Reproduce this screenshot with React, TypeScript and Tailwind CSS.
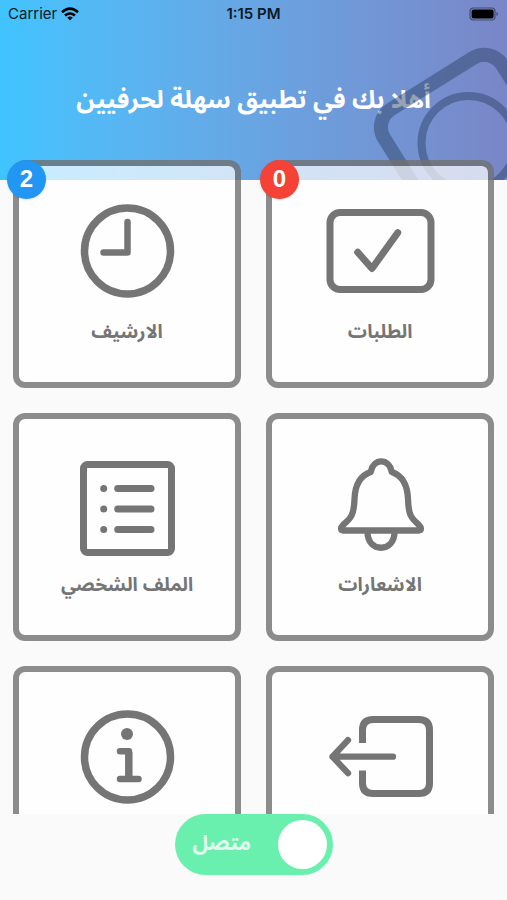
import React from "react";

const arabic = "font-['Noto_Sans_Arabic','DejaVu_Sans',sans-serif]";

type Tile = { name: string; label?: string; icon: React.ReactNode; badge?: string; badgeClass?: string };

const iconProps = {
  viewBox: "0 0 120 110",
  className: "h-[110px] w-[120px]",
  fill: "none",
  stroke: "currentColor",
  strokeLinecap: "round" as const,
  strokeLinejoin: "round" as const,
  "aria-hidden": true,
};

const ArchiveIcon = () => (
  <svg {...iconProps} strokeWidth="7.5">
    <circle cx="60.5" cy="55" r="43" />
    <path d="M60.500 26V56.500H36.500" strokeWidth="6.5" />
  </svg>
);

const RequestsIcon = () => (
  <svg {...iconProps} strokeWidth="7">
    <rect x="10" y="16.5" width="101" height="77" rx="10" />
    <path d="M37.700 56.300L52 72.500L77.700 36.700" />
  </svg>
);

const ProfileIcon = () => (
  <svg {...iconProps} strokeWidth="7">
    <rect x="16.5" y="15.5" width="88" height="88" rx="4" />
    <path d="M50.700 39.500H84M50.700 60H84M50.700 80.500H84M36.700 39.500h.01M36.700 60h.01M36.700 80.500h.01" />
  </svg>
);

const BellIcon = () => (
  <svg {...iconProps} strokeWidth="6.300">
    <path d="M51.200 21.500A10.200 11 0 0 1 71.300 21.500L71.800 23C82 26.500 87.500 36 88 50C88.500 66 91 69 98.500 75.500C102 79 101.500 81.500 98.500 81.500H23.500C20.500 81.500 20 79 23.500 75.500C31 69 34 66 34.500 50C35 36 40.500 26.500 50.700 23Z" />
    <path d="M47.500 83C47.500 104 74.500 104 74.500 83" />
  </svg>
);

const InfoIcon = () => (
  <svg {...iconProps} strokeWidth="7.5">
    <circle cx="60.5" cy="55" r="43" />
    <circle cx="60" cy="32" r="6" fill="currentColor" stroke="none" />
    <path d="M53 49.200H62M53 77H71.500" strokeWidth="6.500" />
    <path d="M61.800 50V76" strokeWidth="7.500" strokeLinecap="butt" />
  </svg>
);

const LogoutIcon = () => (
  <svg {...iconProps} strokeWidth="7">
    <path d="M42.500 41V28Q42.500 17.500 53 17.500H99Q109.500 17.500 109.500 28V81Q109.500 91.500 99 91.500H53Q42.500 91.500 42.500 81V68.500" strokeLinecap="butt" />
    <path d="M73 54.700H12.500M28 38.200L12.500 54.700L28 71.200" strokeWidth="6.300" />
  </svg>
);

const tiles: Tile[] = [
  { name: "الطلبات", label: "الطلبات", icon: <RequestsIcon />, badge: "0", badgeClass: "bg-[#f44336]" },
  { name: "الارشيف", label: "الارشيف", icon: <ArchiveIcon />, badge: "2", badgeClass: "bg-[#2196f3]" },
  { name: "الاشعارات", label: "الاشعارات", icon: <BellIcon /> },
  { name: "الملف الشخصي", label: "الملف الشخصي", icon: <ProfileIcon /> },
  { name: "خروج", icon: <LogoutIcon /> },
  { name: "معلومات", icon: <InfoIcon /> },
];

function StatusBar() {
  return (
    <div dir="ltr" className="grid h-7 grid-cols-3 items-center px-2 font-[Inter,sans-serif] text-[15px] text-[#0b1a24]">
      <div className="flex items-center gap-1">
        <span>Carrier</span>
        <svg viewBox="0 0 18 14" className="h-3.5 w-[18px]" fill="none" stroke="#000" strokeWidth="2.600" aria-hidden="true">
          <path d="M1 5.200Q9 -1.800 17 5.200M4 8.600Q9 4.400 14 8.600" />
          <path d="M9 13.500L6.200 10.600Q9 8.600 11.800 10.600Z" fill="#000" stroke="none" />
        </svg>
      </div>
      <div className="text-center font-semibold">1:15 PM</div>
      <svg viewBox="0 0 30 14" className="h-3.5 w-[30px] justify-self-end" aria-hidden="true">
        <rect x="1" y="1" width="25" height="12" rx="3.500" fill="none" stroke="#000" strokeOpacity=".45" strokeWidth="1.200" />
        <rect x="2.600" y="2.600" width="22" height="9" rx="2" fill="#000" />
        <path d="M27.500 5v4q1.500-.5 1.500-2t-1.500-2z" fill="#000" fillOpacity=".45" />
      </svg>
    </div>
  );
}

export default function App() {
  return (
    <div dir="rtl" className={`flex h-screen flex-col overflow-hidden bg-[#fafafa] ${arabic}`}>
      <header className="relative h-[180px] shrink-0 overflow-hidden bg-linear-to-r from-[#40c4ff] to-[#7986c7]">
        <StatusBar />
        <h1 className="mt-14 text-center text-[25px] leading-8 font-bold text-white">أهلا بك في تطبيق سهلة لحرفيين</h1>
        <svg viewBox="0 0 140 180" className="absolute top-0 right-0 h-[180px] w-[140px]" fill="none" stroke="#30466b" strokeOpacity=".5" aria-hidden="true">
          <g transform="translate(6 120.500) rotate(-32)">
            <rect width="139" height="200" rx="21" strokeWidth="14" />
          </g>
          <circle cx="101.500" cy="143" r="47" strokeWidth="8" />
        </svg>
      </header>

      <main className="relative -mt-5 min-h-0 flex-1 overflow-hidden px-[13px]">
        <ul className="grid grid-cols-2 gap-[25px]">
          {tiles.map((t) => (
            <li key={t.name} className="relative aspect-square">
              <button type="button" aria-label={t.name} className="flex size-full flex-col items-center rounded-xl border-6 border-[#707070]/80 bg-white/70 bg-clip-padding pt-[30px] text-[#757575]">
                {t.icon}
                {t.label && <span className="mt-3 text-[19px] leading-7 font-bold">{t.label}</span>}
              </button>
              {t.badge && (
                <span className={`absolute top-0 -left-1.5 flex size-[39px] items-center justify-center rounded-full pb-0.5 font-['Liberation_Sans',sans-serif] text-2xl font-bold text-white shadow ${t.badgeClass}`}>
                  {t.badge}
                </span>
              )}
            </li>
          ))}
        </ul>
      </main>

      <footer className="flex h-[86px] shrink-0 items-start justify-center">
        <label className="flex h-[61px] w-[158px] cursor-pointer items-center justify-between rounded-full bg-[#69f0ae] pr-1.5 pl-[18px]" dir="ltr">
          <input type="checkbox" role="switch" defaultChecked className="peer sr-only" />
          <span dir="rtl" className="pb-1 text-[21px] leading-8 font-bold text-white/80">متصل</span>
          <span className="size-[49px] rounded-full bg-white" />
        </label>
      </footer>
    </div>
  );
}
